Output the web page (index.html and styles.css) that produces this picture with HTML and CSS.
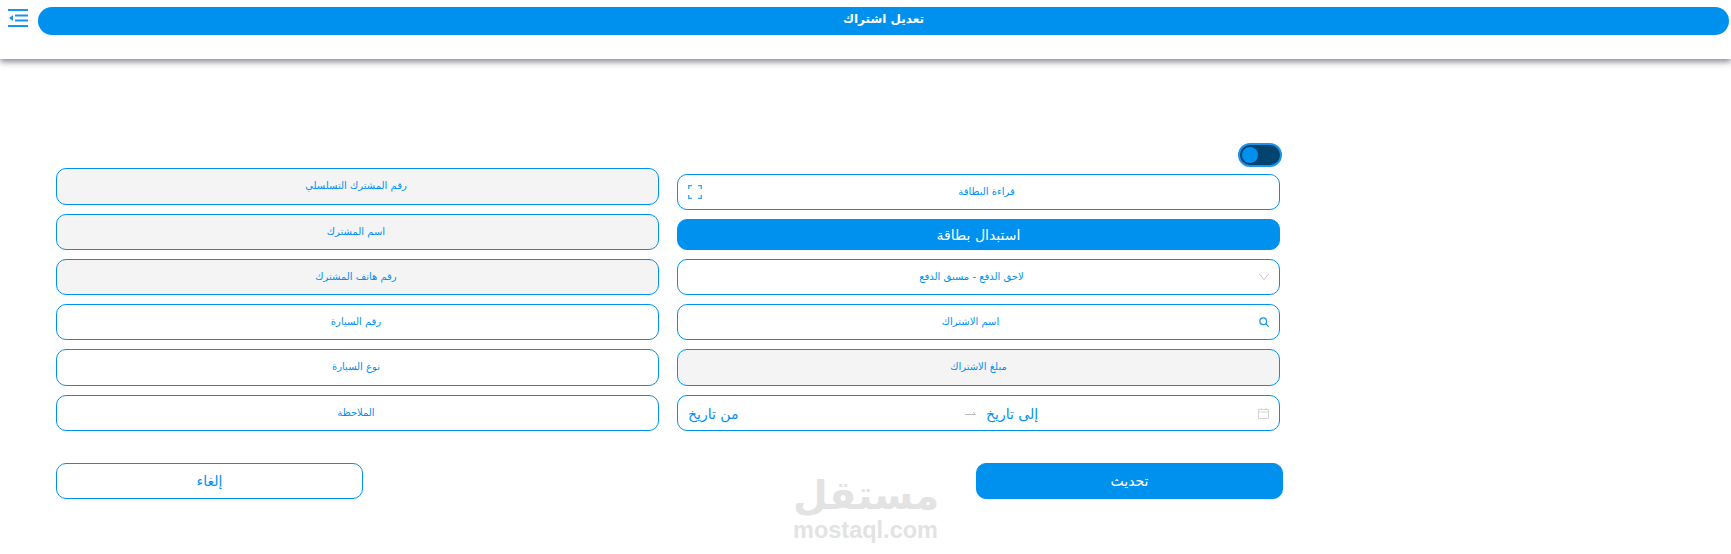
FILE: index.html
```html
<!DOCTYPE html>
<html lang="ar">
<head>
    <meta charset="UTF-8">
    <title>تعديل اشتراك</title>
    <link rel="stylesheet" href="styles.css">
</head>
<body>
    <header class="topbar">
        <button class="menu-btn" aria-label="menu">
            <svg width="20" height="18" viewBox="0 0 20 18" fill="none" stroke="#1a94ec" stroke-width="1.8">
                <path d="M0 1h20M7 6.5h13M7 11.5h13M0 17h20"/>
                <path d="M1 9l4-3v6z" fill="#1a94ec" stroke="none"/>
            </svg>
        </button>
        <h1 class="title">تعديل اشتراك</h1>
    </header>

    <main class="form">
        <div class="columns">
            <div class="col col-left">
                <div class="field readonly">رقم المشترك التسلسلي</div>
                <div class="field readonly">اسم المشترك</div>
                <div class="field readonly">رقم هاتف المشترك</div>
                <div class="field">رقم السيارة</div>
                <div class="field">نوع السيارة</div>
                <div class="field">الملاحظة</div>
            </div>
            <div class="col col-right">
                <div class="switch"><span class="knob"></span></div>
                <div class="field has-left-icon">
                    <svg class="icon icon-left" width="14" height="14" viewBox="0 0 14 14" fill="none" stroke="#3ba6f0" stroke-width="1.3">
                        <path d="M.7 4V.7H4M10 .7h3.3V4M13.3 10v3.3H10M4 13.3H.7V10"/>
                    </svg>
                    قراءة البطاقة
                </div>
                <button class="btn btn-primary btn-wide">استبدال بطاقة</button>
                <div class="field has-right-icon field-select">
                    لاحق الدفع - مسبق الدفع
                    <svg class="icon icon-right" width="10" height="7" viewBox="0 0 10 7" fill="none" stroke="#c4c4c8" stroke-width="1">
                        <path d="M.5 .5L5 6.2 9.5 .5"/>
                    </svg>
                </div>
                <div class="field has-right-icon">
                    اسم الاشتراك
                    <svg class="icon icon-right" width="10" height="10" viewBox="0 0 10 10" fill="none" stroke="#1a94ec" stroke-width="1.2">
                        <circle cx="4.2" cy="4.2" r="3.4"/>
                        <path d="M6.8 6.8L9.7 9.7"/>
                    </svg>
                </div>
                <div class="field readonly field-tall">مبلغ الاشتراك</div>
                <div class="field date-range">
                    <span class="date-from" dir="rtl">من تاريخ</span>
                    <svg class="date-arrow" width="11" height="6" viewBox="0 0 11 6" fill="none" stroke="#bdbdc2" stroke-width="1">
                        <path d="M0 3.5h10.5L8 1"/>
                    </svg>
                    <span class="date-to" dir="rtl">إلى تاريخ</span>
                    <svg class="icon-date" width="11" height="11" viewBox="0 0 11 11" fill="none" stroke="#d4d4d8" stroke-width="1">
                        <path d="M.5 1.5h10v9H.5zM.5 4h10M3 0v2M8 0v2"/>
                    </svg>
                </div>
            </div>
        </div>

        <div class="actions">
            <button class="btn btn-outline">إلغاء</button>
            <button class="btn btn-primary">تحديث</button>
        </div>
    </main>

    <div class="watermark">
        <div class="wm-ar">مستقل</div>
        <div class="wm-en">mostaql.com</div>
    </div>
</body>
</html>
```

FILE: styles.css
```css
body {
    margin: 0;
    background: #fff;
    color: #0091ee;
    font-family: 'DejaVu Sans', sans-serif;
    height: 554px;
    overflow: hidden;
    position: relative;
}

.topbar {
    height: 59px;
    box-sizing: border-box;
    padding: 7px 2px 0 8px;
    display: flex;
    align-items: flex-start;
    gap: 10px;
    background: #fff;
    box-shadow: 0 3px 6px rgba(50, 40, 70, 0.55);
}

.menu-btn {
    width: 20px;
    height: 18px;
    margin-top: 2px;
    padding: 0;
    border: none;
    background: none;
    flex: none;
}

.menu-btn svg {
    display: block;
}

.title {
    flex: 1;
    height: 28px;
    margin: 0;
    border-radius: 14px;
    background: #0091ee;
    color: #fff;
    font-size: 12px;
    font-weight: bold;
    line-height: 24px;
    text-align: center;
}

.form {
    width: 1224px;
    margin-left: 56px;
    padding-top: 84px;
}

.columns {
    display: grid;
    grid-template-columns: 603px 603px;
    gap: 18px;
}

.col {
    display: flex;
    flex-direction: column;
    gap: 9px;
}

.col-left {
    padding-top: 25px;
}

.field {
    position: relative;
    height: 36px;
    box-sizing: border-box;
    border: 1px solid #0091ee;
    border-radius: 10px;
    background: #fff;
    display: flex;
    align-items: center;
    justify-content: center;
    font-size: 10px;
    padding-bottom: 2px;
}

.col-left .field {
    padding-right: 3px;
}

.readonly {
    background: #f4f4f4;
}

.col-left .field:first-child,
.col-left .field:nth-child(5),
.field-tall {
    height: 37px;
}

.has-left-icon {
    padding-left: 16px;
}

.has-right-icon {
    padding-right: 16px;
}

.field-select {
    padding-right: 14px;
}

.switch {
    align-self: flex-end;
    width: 44px;
    height: 24px;
    box-sizing: border-box;
    margin: 0 -2px -2px 0;
    padding: 2px;
    border: 2px solid #1a94ec;
    border-radius: 12px;
    background: #03436f;
}

.knob {
    display: block;
    width: 16px;
    height: 16px;
    border-radius: 50%;
    background: #0091ee;
}

.icon {
    position: absolute;
    top: 50%;
    transform: translateY(-50%);
}

.icon-left {
    left: 10px;
}

.icon-right {
    right: 10px;
}

.date-range {
    justify-content: flex-start;
    padding: 1px 10px 0;
    font-size: 14px;
}

.date-from {
    flex: none;
    width: 277px;
    direction: ltr;
    text-align: left;
}

.date-to {
    flex: 1;
    direction: ltr;
    text-align: left;
}

.date-arrow {
    margin-right: 10px;
    flex: none;
}

.icon-date {
    flex: none;
}

.btn {
    height: 36px;
    box-sizing: border-box;
    border: 1px solid #0091ee;
    border-radius: 10px;
    font-family: inherit;
    font-size: 14px;
    width: 307px;
    padding: 0;
}

.btn-primary {
    background: #0091ee;
    color: #fff;
}

.btn-outline {
    background: #fff;
    color: #0091ee;
}

.btn-wide {
    width: 100%;
    height: 31px;
}

.actions {
    display: flex;
    justify-content: space-between;
    margin-top: 32px;
    width: 1227px;
}

/* watermark from the screenshot, lies over the page */
.watermark {
    position: absolute;
    left: 793px;
    top: 472px;
    width: 144px;
    text-align: left;
    color: #e3e3e3;
    font-weight: bold;
}

.wm-ar {
    font-size: 40px;
    line-height: 46px;
    white-space: nowrap;
}

.wm-en {
    font-family: 'Liberation Sans', sans-serif;
    font-size: 23.5px;
    line-height: 24px;
    white-space: nowrap;
}
```
